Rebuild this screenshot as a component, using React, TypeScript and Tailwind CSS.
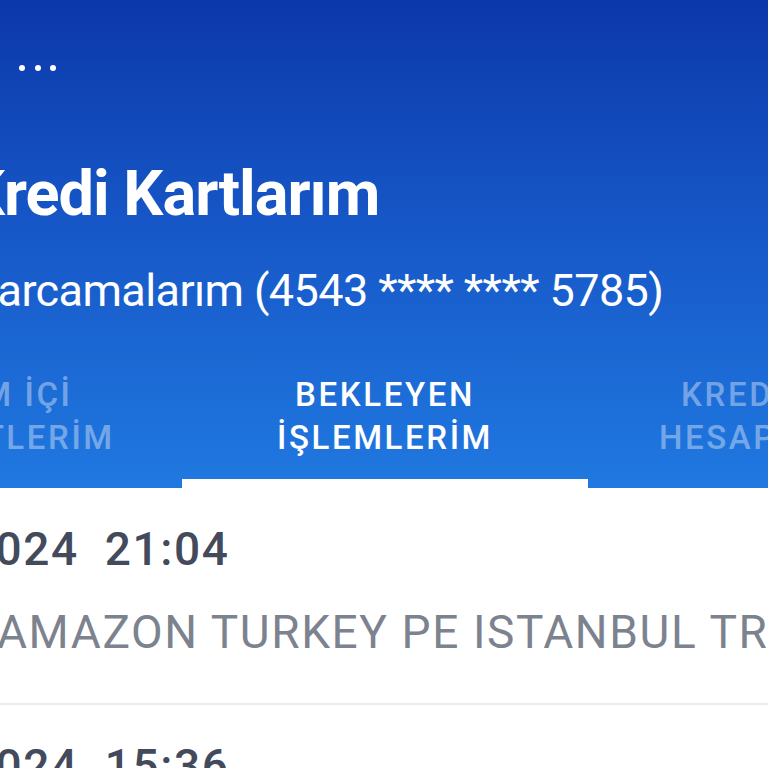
const tabs = [
  { lines: ['DÖNEM İÇİ', 'HAREKETLERİM'], active: false },
  { lines: ['BEKLEYEN', 'İŞLEMLERİM'], active: true },
  { lines: ['KREDİ KARTI', 'HESAP ÖZETİM'], active: false },
];

const transactions = [
  { date: '17.01.2024', time: '21:04', merchant: 'AMAZON TURKEY PE ISTANBUL TR' },
  { date: '16.01.2024', time: '15:36', merchant: 'TRENDYOL ISTANBUL TR' },
];

export default function App() {
  return (
    <div className="h-[768px] w-[768px] overflow-hidden bg-white font-['Roboto',sans-serif]">
      <header className="bg-[linear-gradient(180deg,#0c38aa_0%,#1656c6_45%,#2079e0_100%)] text-white">
        <div className="flex gap-[9.5px] pl-[19px] pt-[65px]">
          <span className="h-[6px] w-[6px] rounded-full bg-white" />
          <span className="h-[6px] w-[6px] rounded-full bg-white" />
          <span className="h-[6px] w-[6px] rounded-full bg-white" />
        </div>
        <h1 className="ml-[-35px] mt-[86px] whitespace-nowrap text-[63px] font-bold leading-[74px] tracking-[-1px]">
          Kredi Kartlarım
        </h1>
        <p className="ml-[-34px] mt-[32px] whitespace-nowrap text-[45px] leading-[56px] tracking-[-0.6px]">
          Harcamalarım (4543 **** **** 5785)
        </p>
        <nav className="ml-[-224px] flex w-[1218px]">
          {tabs.map((tab) => (
            <div key={tab.lines[0]} className="flex h-[169px] w-[406px] flex-col items-center">
              <div
                className={`pt-[54px] text-center text-[33px] font-medium leading-[43px] tracking-[2.6px] whitespace-nowrap ${
                  tab.active ? 'text-white' : 'text-white/40'
                }`}
              >
                {tab.lines.map((line) => (
                  <div key={line}>{line}</div>
                ))}
              </div>
              {tab.active && <div className="mt-auto h-[9px] w-full bg-white" />}
            </div>
          ))}
        </nav>
      </header>

      <ul>
        {transactions.map((t) => (
          <li key={t.time} className="border-b-2 border-[#ebebed] pb-[43px] pt-[33px]">
            <div className="ml-[-172px] whitespace-pre text-[46px] font-medium leading-[56px] tracking-[1.6px] text-[#434a5b]">
              {`${t.date}  ${t.time}`}
            </div>
            <div className="ml-[-3px] mt-[27px] whitespace-nowrap text-[46px] leading-[56px] tracking-[1.6px] text-[#7c828e]">
              {t.merchant}
            </div>
          </li>
        ))}
      </ul>
    </div>
  );
}
